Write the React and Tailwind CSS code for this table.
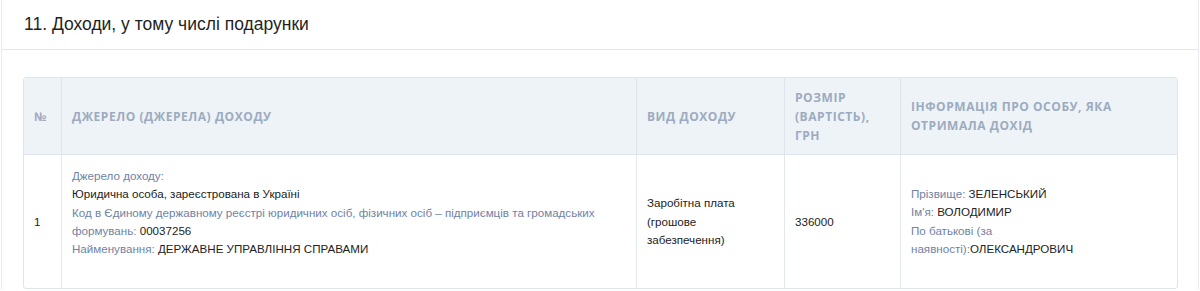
export default function App() {
  const th =
    "h-[76px] pl-[10px] pr-3 text-left align-middle font-['Open_Sans',sans-serif] text-[12px] font-bold uppercase leading-[19px] tracking-[0.55px] text-[#9dabc0] border-r border-[#dfe5ec] last:border-r-0"
  const td =
    "pl-[10px] pr-3 py-3 align-middle text-[11.6px] leading-[18.3px] text-[#222] border-r border-[#e3e8ee] last:border-r-0 border-t border-t-[#dfe5ec]"
  const lbl = "text-[#6f82a6]"

  return (
    <div className="h-[291px] w-[1200px] overflow-hidden bg-white font-['Liberation_Sans',Arial,sans-serif]">
      <div className="ml-[1px] mr-[1px] border-x border-[#e8ebef]">
        <div className="flex h-[50px] items-center border-b border-[#e3e6ea] px-[22px]">
          <h2 className="text-[17.5px] text-[#1f1f1f]">11. Доходи, у тому числі подарунки</h2>
        </div>
        <div className="px-[21px] pt-[27px]">
          <table className="w-[1153px] table-fixed border-separate border-spacing-0 rounded-[3px] border border-[#dfe5ec]">
            <colgroup>
              <col className="w-[38px]" />
              <col className="w-[575px]" />
              <col className="w-[148px]" />
              <col className="w-[116px]" />
              <col className="w-[276px]" />
            </colgroup>
            <thead className="bg-[#eef3f8]">
              <tr>
                <th className={th + " rounded-tl-[3px]"}>№</th>
                <th className={th}>Джерело (джерела) доходу</th>
                <th className={th}>Вид доходу</th>
                <th className={th}>
                  Розмір
                  <br />
                  (вартість),
                  <br />
                  грн
                </th>
                <th className={th + " rounded-tr-[3px]"}>
                  Інформація про особу, яка
                  <br />
                  отримала дохід
                </th>
              </tr>
            </thead>
            <tbody>
              <tr>
                <td className={td}>1</td>
                <td className={td}>
                  <div className={lbl}>Джерело доходу:</div>
                  <div>Юридична особа, зареєстрована в Україні</div>
                  <div>
                    <span className={lbl}>
                      Код в Єдиному державному реєстрі юридичних осіб, фізичних осіб – підприємців та громадських
                      <br />
                      формувань:
                    </span>{" "}
                    00037256
                  </div>
                  <div>
                    <span className={lbl}>Найменування:</span> ДЕРЖАВНЕ УПРАВЛІННЯ СПРАВАМИ
                  </div>
                  <div className="h-[18px]" />
                </td>
                <td className={td}>
                  Заробітна плата
                  <br />
                  (грошове
                  <br />
                  забезпечення)
                </td>
                <td className={td}>336000</td>
                <td className={td}>
                  <div>
                    <span className={lbl}>Прізвище:</span> ЗЕЛЕНСЬКИЙ
                  </div>
                  <div>
                    <span className={lbl}>Ім'я:</span> ВОЛОДИМИР
                  </div>
                  <div>
                    <span className={lbl}>
                      По батькові (за
                      <br />
                      наявності):
                    </span>
                    ОЛЕКСАНДРОВИЧ
                  </div>
                </td>
              </tr>
            </tbody>
          </table>
        </div>
      </div>
    </div>
  )
}
